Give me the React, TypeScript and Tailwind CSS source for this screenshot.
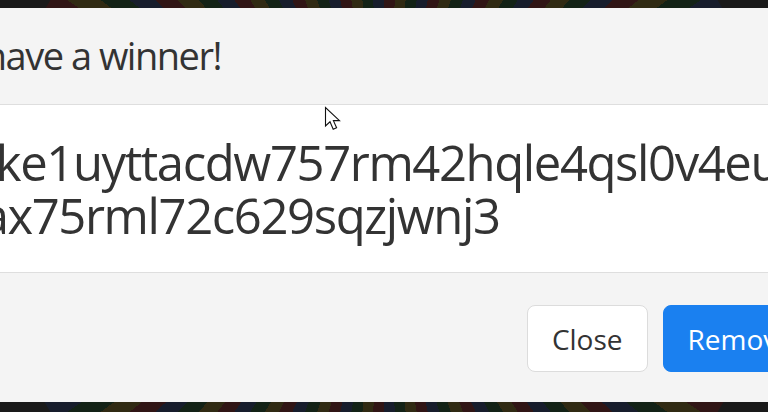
import React from "react";

const font = { fontFamily: '"Open Sans", "Noto Sans", sans-serif' };

function Cursor() {
    return (
        <svg
            className="absolute left-[324px] top-[106px] z-20"
            width="20"
            height="26"
            viewBox="0 0 20 26"
        >
            <path
                d="M1.5 1.5 L1.5 20 L6 15.8 L9.2 23.2 L12.6 21.8 L9.4 14.6 L15.5 14.6 Z"
                fill="#ffffff"
                stroke="#111111"
                strokeWidth="1.1"
                strokeLinejoin="miter"
            />
        </svg>
    );
}

export default function App(): JSX.Element {
    return (
        <div className="relative w-[768px] h-[412px] overflow-hidden bg-[#2b2b2b]" style={font}>
            {/* prize wheel behind the backdrop */}
            <div className="absolute left-[-8px] top-[-186px] w-[784px] h-[784px] rounded-full bg-[repeating-conic-gradient(#7a1c1c_0deg_3deg,#7a6414_3deg_6deg,#124a1e_6deg_9deg,#22386e_9deg_12deg)]" />
            <div className="absolute inset-0 bg-[rgba(20,20,20,0.72)]" />

            <div className="relative z-10 pt-[8px]">
                <div className="ml-[-90px] w-[930px] h-[394px] flex flex-col bg-white text-[#333333]">
                    <div className="h-[97px] shrink-0 flex items-center pl-[12px] bg-[#f4f4f4] border-b border-[#dedede]">
                        <h5 className="text-[38px] leading-[1.2] tracking-[-1.5px] whitespace-nowrap">We have a winner!</h5>
                    </div>
                    <div className="h-[168px] shrink-0 flex flex-col justify-center border-b border-[#dedede] text-[49px] leading-[53px] tracking-[-1.4px] whitespace-nowrap">
                        <div className="pl-[35px]">9xke1uyttacdw757rm42hqle4qsl0v4eujx</div>
                        <div className="pl-[43px]">nax75rml72c629sqzjwnj3</div>
                    </div>
                    <div className="flex-1 flex items-center justify-end gap-[15px] pr-[22px] pt-[2px] bg-[#f4f4f4]">
                        <button className="h-[67px] px-[24px] rounded-[8px] border border-[#dcdcdc] bg-white text-[28px] text-[#333333]">
                            Close
                        </button>
                        <button className="h-[67px] px-[24px] rounded-[8px] border border-[#1a80f0] bg-[#1a80f0] text-[28px] text-white">
                            Remove
                        </button>
                    </div>
                </div>
            </div>

            <Cursor />
        </div>
    );
}
